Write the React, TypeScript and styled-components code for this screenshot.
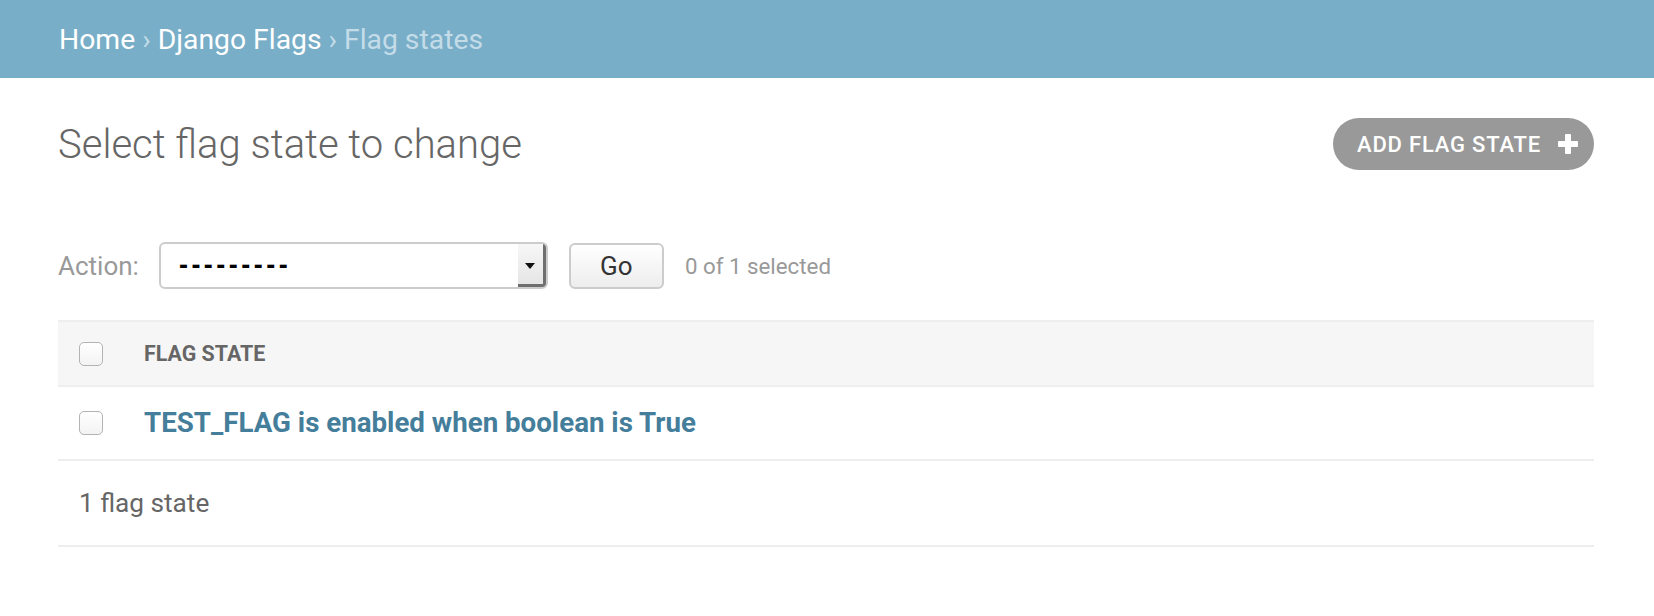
import React from "react";
import styled, { createGlobalStyle } from "styled-components";

const GlobalStyle = createGlobalStyle`
  html, body { margin: 0; padding: 0; background: #fff; }
  body {
    font-family: Roboto, "Noto Sans", "Liberation Sans", sans-serif;
    color: #333;
    -webkit-font-smoothing: antialiased;
  }
  * { box-sizing: border-box; }
`;

const Breadcrumbs = styled.nav`
  height: 78px;
  background: #79aec8;
  display: flex;
  align-items: center;
  padding: 0 59px;
  font-size: 28.3px;
  color: #c4dce8;
  white-space: pre;
`;

const Crumb = styled.a`
  color: #fff;
  text-decoration: none;
`;

const Content = styled.main`
  padding: 40px 60px 0 58px;
`;

const TitleRow = styled.div`
  display: flex;
  align-items: center;
  justify-content: space-between;
  height: 52px;
`;

const Title = styled.h1`
  margin: 0;
  font-size: 40px;
  font-weight: 300;
  color: #666;
`;

const AddButton = styled.a`
  display: flex;
  align-items: center;
  gap: 17px;
  height: 52px;
  width: 261px;
  padding: 0 16px 0 24px;
  border-radius: 26px;
  background: #999;
  color: #fff;
  font-size: 22px;
  font-weight: 500;
  letter-spacing: 0.8px;
  text-transform: uppercase;
  text-decoration: none;
`;

const ActionsBar = styled.div`
  display: flex;
  align-items: center;
  margin-top: 72px;
  height: 47px;
  font-size: 26px;
  color: #999;
`;

const ActionLabel = styled.label`
  margin-right: 20px;
`;

const Select = styled.div`
  display: flex;
  align-items: stretch;
  width: 389px;
  height: 47px;
  border: 2px solid #ccc;
  border-radius: 6px;
  background: #fff;
  overflow: hidden;
`;

const SelectValue = styled.span`
  flex: 1;
  display: flex;
  align-items: center;
  padding-left: 18px;
  font-family: "Liberation Sans", Arial, sans-serif;
  font-size: 27px;
  font-weight: 700;
  color: #000;
  letter-spacing: 3.5px;
`;

const SelectArrow = styled.span`
  width: 28px;
  display: flex;
  align-items: center;
  justify-content: center;
  background: linear-gradient(#f7f7f7, #e4e4e4);
  box-shadow: inset -3px -3px 0 #6f6f6f;
  padding-right: 3px;
`;

const GoButton = styled.button`
  margin-left: 21px;
  width: 95px;
  height: 46px;
  border: 2px solid #ccc;
  border-radius: 6px;
  background: linear-gradient(#fff, #ededed);
  font-family: Roboto, "Liberation Sans", sans-serif;
  font-size: 26px;
  color: #333;
  padding: 0;
`;

const Counter = styled.span`
  margin-left: 21px;
  font-size: 22.3px;
  color: #999;
`;

const Table = styled.table`
  width: 100%;
  margin-top: 31px;
  border-collapse: collapse;
`;

const HeadRow = styled.tr`
  background: #f6f6f6;
  border-top: 2px solid #eee;
  border-bottom: 2px solid #eee;
`;

const BodyRow = styled.tr`
  border-bottom: 2px solid #eee;
`;

const CheckCell = styled.td<{ $h: number }>`
  width: 86px;
  height: ${(p) => p.$h}px;
  padding: 0 0 0 21px;
  vertical-align: middle;
`;

const HeadCell = styled.th`
  text-align: left;
  padding: 0;
  font-size: 21.4px;
  font-weight: 700;
  color: #666;
  text-transform: uppercase;
  vertical-align: middle;
`;

const Cell = styled.th`
  text-align: left;
  padding: 0 0 2px 0;
  font-size: 27.7px;
  font-weight: 700;
  vertical-align: middle;
`;

const RowLink = styled.a`
  color: #447e9b;
  text-decoration: none;
`;

const Checkbox = styled.span`
  display: block;
  width: 24px;
  height: 24px;
  border: 1.5px solid #b3b3b3;
  border-radius: 5px;
  background: linear-gradient(#fff, #f3f3f3);
`;

const Paginator = styled.div`
  height: 86px;
  display: flex;
  align-items: center;
  padding-left: 21px;
  border-bottom: 2px solid #eee;
  font-size: 26.2px;
  color: #666;
`;

const PlusIcon = () => (
  <svg width="20" height="20" viewBox="0 0 20 20" aria-hidden="true">
    <rect x="7" y="0" width="6" height="20" rx="1" fill="#fff" />
    <rect x="0" y="7" width="20" height="6" rx="1" fill="#fff" />
  </svg>
);

const ArrowIcon = () => (
  <svg width="10" height="6" viewBox="0 0 10 6" aria-hidden="true">
    <path d="M0 0 L10 0 L5 6 Z" fill="#111" />
  </svg>
);

export default function App() {
  return (
    <>
      <GlobalStyle />
      <Breadcrumbs>
        <Crumb href="#">Home</Crumb>
        {" › "}
        <Crumb href="#">Django Flags</Crumb>
        {" › Flag states"}
      </Breadcrumbs>
      <Content>
        <TitleRow>
          <Title>Select flag state to change</Title>
          <AddButton href="#">
            Add flag state
            <PlusIcon />
          </AddButton>
        </TitleRow>
        <ActionsBar>
          <ActionLabel>Action:</ActionLabel>
          <Select>
            <SelectValue>---------</SelectValue>
            <SelectArrow>
              <ArrowIcon />
            </SelectArrow>
          </Select>
          <GoButton>Go</GoButton>
          <Counter>0 of 1 selected</Counter>
        </ActionsBar>
        <Table>
          <thead>
            <HeadRow>
              <CheckCell $h={65}>
                <Checkbox />
              </CheckCell>
              <HeadCell>Flag state</HeadCell>
            </HeadRow>
          </thead>
          <tbody>
            <BodyRow>
              <CheckCell $h={74}>
                <Checkbox />
              </CheckCell>
              <Cell>
                <RowLink href="#">TEST_FLAG is enabled when boolean is True</RowLink>
              </Cell>
            </BodyRow>
          </tbody>
        </Table>
        <Paginator>1 flag state</Paginator>
      </Content>
    </>
  );
}
